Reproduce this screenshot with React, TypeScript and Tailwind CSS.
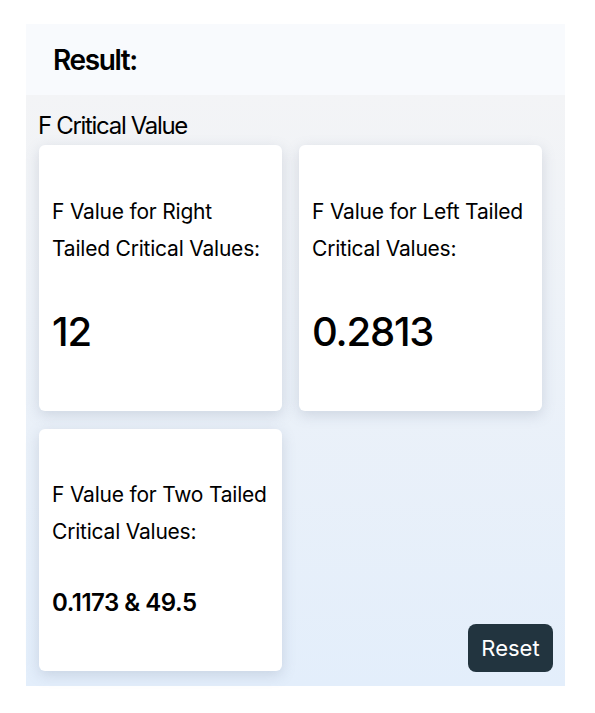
import React from "react";

function Card({
  title,
  value,
  valueClass,
  cardClass,
}: {
  title: string;
  value: string;
  valueClass: string;
  cardClass: string;
}) {
  return (
    <div
      className={`w-[243px] ${cardClass} bg-white rounded-md shadow-[0_4px_14px_rgba(100,116,139,0.22)] flex flex-col pl-[13px] pr-[11px]`}
    >
      <div className="text-[21px] leading-[36.5px] tracking-[-0.01em] text-black">{title}</div>
      <div className={valueClass}>{value}</div>
    </div>
  );
}

export default function App() {
  return (
    <div
      className="w-[595px] h-[713px] bg-white pt-[24px] pl-[26px]"
      style={{ fontFamily: "Inter, 'Noto Sans', sans-serif" }}
    >
      <div className="w-[539px]">
        <div className="h-[71px] bg-[#f8fafd] flex items-center px-[27px]">
          <span className="text-[28px] leading-[34px] font-semibold tracking-[-0.05em] text-black">Result:</span>
        </div>
        <div className="bg-gradient-to-b from-[#f3f4f6] to-[#e3eefb] pl-[12px] pr-[12px] pt-[17px] pb-[14px] flex flex-col">
          <div className="text-[24px] leading-[28px] tracking-[-0.055em] text-black">F Critical Value</div>
          <div className="mt-[5px] ml-[1px] flex gap-[17px]">
            <Card
              cardClass="h-[266px] pt-[49px]"
              title="F Value for Right Tailed Critical Values:"
              value="12"
              valueClass="mt-[45px] text-[40px] leading-[40px] font-medium tracking-[-0.03em] text-black"
            />
            <Card
              cardClass="h-[266px] pt-[49px]"
              title="F Value for Left Tailed Critical Values:"
              value="0.2813"
              valueClass="mt-[45px] text-[40px] leading-[40px] font-medium tracking-[-0.03em] text-black"
            />
          </div>
          <div className="mt-[18px] ml-[1px] flex items-end justify-between">
            <div className="mb-[1px]">
              <Card
                cardClass="h-[242px] pt-[48px]"
                title="F Value for Two Tailed Critical Values:"
                value="0.1173 & 49.5"
                valueClass="mt-[37px] text-[24px] leading-[32px] font-semibold tracking-[-0.02em] text-black"
              />
            </div>
            <button className="h-[48px] w-[85px] rounded-lg bg-[#22343f] text-white text-[22px] leading-[28px]">
              Reset
            </button>
          </div>
        </div>
      </div>
    </div>
  );
}
